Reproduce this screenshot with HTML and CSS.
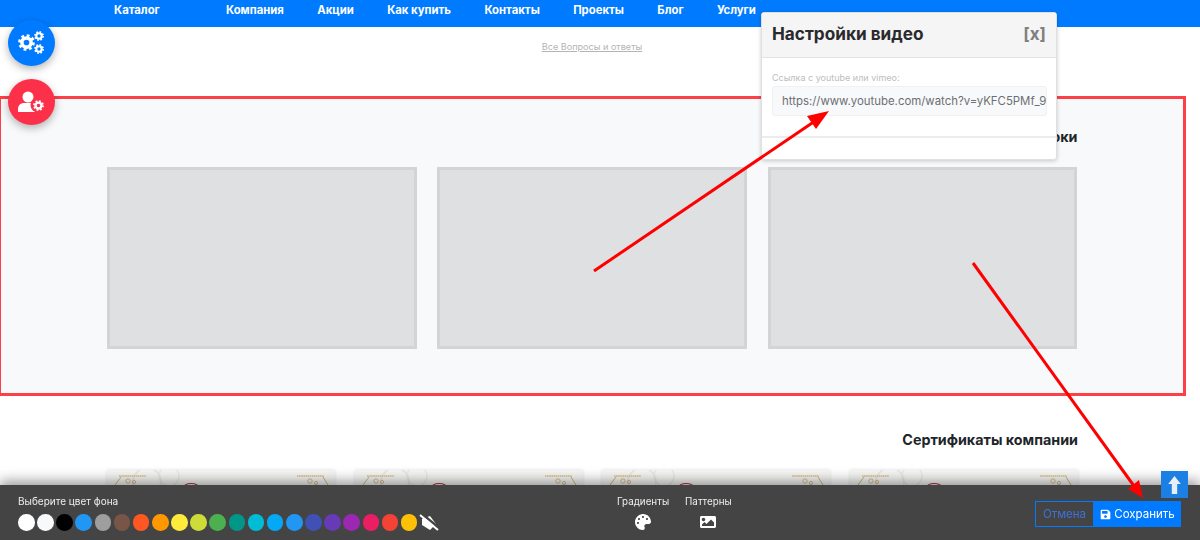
FILE: index.html
```html
<!DOCTYPE html>
<html lang="ru">
<head>
	<meta charset="UTF-8">
	<title>Настройки видео</title>
	<link rel="stylesheet" href="styles.css">
</head>
<body>
	<svg class="defs" width="0" height="0">
		<symbol id="gear" viewBox="0 0 24 24">
			<circle cx="12" cy="12" r="6.5" fill="none" stroke="currentColor" stroke-width="5"/>
			<circle cx="12" cy="12" r="9.8" fill="none" stroke="currentColor" stroke-width="4" stroke-dasharray="3.9 3.8"/>
		</symbol>
		<symbol id="ornament" viewBox="0 0 228 20">
			<circle cx="40" cy="12" r="14" fill="none" stroke="#e6e6e3" stroke-width="1.5"/>
			<circle cx="62" cy="6" r="10" fill="none" stroke="#e9e9e6" stroke-width="1.5"/>
			<path d="M12 6h27M190 6h27" fill="none" stroke="#e0cc9c" stroke-width="2" stroke-dasharray="1.5 .6"/>
			<path d="M14 7l-6 8M216 7l5 8" fill="none" stroke="#cdb27a" stroke-width="1"/>
			<circle cx="21" cy="11" r="2.2" fill="none" stroke="#cfb47c" stroke-width=".9"/>
			<circle cx="27" cy="12" r="1.6" fill="none" stroke="#cfb47c" stroke-width=".9"/>
			<circle cx="203" cy="11" r="2.2" fill="none" stroke="#cfb47c" stroke-width=".9"/>
			<circle cx="209" cy="13" r="1.6" fill="none" stroke="#cfb47c" stroke-width=".9"/>
			<path d="M76 18c2-6 14-6 17 0" fill="none" stroke="#b8303a" stroke-width="1.2"/>
		</symbol>
	</svg>

	<div class="nav">
		<a href="#" class="catalog">Каталог</a>
		<a href="#">Компания</a>
		<a href="#">Акции</a>
		<a href="#">Как купить</a>
		<a href="#">Контакты</a>
		<a href="#">Проекты</a>
		<a href="#">Блог</a>
		<a href="#">Услуги</a>
	</div>

	<div class="faq"><a href="#">Все Вопросы и ответы</a></div>

	<div class="video">
		<h2>Видеоуроки</h2>
		<div class="tiles">
			<div class="tile"></div>
			<div class="tile"></div>
			<div class="tile"></div>
		</div>
	</div>

	<div class="certs">
		<h2>Сертификаты компании</h2>
		<div class="cert-list">
			<div class="cert"><svg><use href="#ornament"/></svg></div>
			<div class="cert"><svg><use href="#ornament"/></svg></div>
			<div class="cert"><svg><use href="#ornament"/></svg></div>
			<div class="cert"><svg><use href="#ornament"/></svg></div>
		</div>
	</div>

	<a href="#" class="fab fab-blue">
		<svg width="27" height="24" viewBox="0 0 27 24">
			<use href="#gear" x="0" y="3" width="17" height="17"/>
			<use href="#gear" x="16" y="0" width="10" height="10"/>
			<use href="#gear" x="16" y="13" width="10" height="10"/>
		</svg>
	</a>
	<a href="#" class="fab fab-red">
		<svg width="27" height="22" viewBox="0 0 27 22">
			<circle cx="10" cy="6" r="5.5" fill="currentColor"/>
			<path d="M0 21v-3c0-4 3-6 6-6h8c1 0 2 .3 3 1v8z" fill="currentColor"/>
			<circle cx="20" cy="14" r="7.5" fill="#fd3049"/>
			<use href="#gear" x="15" y="9" width="11" height="11"/>
		</svg>
	</a>

	<div class="modal">
		<div class="modal-head">
			<span class="modal-title">Настройки видео</span>
			<span class="modal-close">[x]</span>
		</div>
		<div class="modal-body">
			<label>Ссылка с youtube или vimeo:</label>
			<div class="field">https://www.youtube.com/watch?v=yKFC5PMf_9</div>
		</div>
		<div class="modal-foot"></div>
	</div>

	<svg class="arrows" width="1200" height="540" viewBox="0 0 1200 540">
		<path d="M594 271L818 119" stroke="#f00" stroke-width="3" fill="none"/>
		<path d="M829 111L807 116L816 129z" fill="#f00"/>
		<path d="M973 263L1134 486" stroke="#f00" stroke-width="3" fill="none"/>
		<path d="M1143 498L1128 489L1139 480z" fill="#f00"/>
	</svg>

	<a href="#" class="up">
		<svg width="13" height="18" viewBox="0 0 14 20"><path d="M7 0l7 9H10v11H4V9H0z" fill="#e8eef5"/></svg>
	</a>

	<div class="bar">
		<div class="bar-colors">
			<div class="bar-label">Выберите цвет фона</div>
			<div class="swatches">
				<span class="swatch c-white"></span>
				<span class="swatch c-light"></span>
				<span class="swatch c-black"></span>
				<span class="swatch c-blue"></span>
				<span class="swatch c-grey"></span>
				<span class="swatch c-brown"></span>
				<span class="swatch c-deep-orange"></span>
				<span class="swatch c-orange"></span>
				<span class="swatch c-yellow"></span>
				<span class="swatch c-lime"></span>
				<span class="swatch c-green"></span>
				<span class="swatch c-teal"></span>
				<span class="swatch c-cyan"></span>
				<span class="swatch c-light-blue"></span>
				<span class="swatch c-blue"></span>
				<span class="swatch c-indigo"></span>
				<span class="swatch c-deep-purple"></span>
				<span class="swatch c-purple"></span>
				<span class="swatch c-pink"></span>
				<span class="swatch c-red"></span>
				<span class="swatch c-amber"></span>
				<svg class="no-fill" width="20" height="17" viewBox="0 0 20 17">
					<path d="M3 5l8-3 6 8-6 6-8-5z" fill="#fff"/>
					<path d="M3 0l16 13" stroke="#444" stroke-width="2.5"/>
					<path d="M1 1l18 15" stroke="#fff" stroke-width="2"/>
				</svg>
			</div>
		</div>
		<div class="bar-tool">
			<div class="bar-label">Градиенты</div>
			<svg width="16" height="16" viewBox="0 0 512 512"><path fill="#fff" d="M204.3 5C104.9 24.4 24.8 104.3 5.2 203.4c-37 187 131.7 326.4 258.8 306.7 41.2-6.4 61.4-54.6 42.5-91.7-23.1-45.4 9.9-98.4 61-98.4h79.7c35.8 0 64.8-29.6 64.9-65.3C511.5 97.1 368.1-26.9 204.3 5zM96 320c-17.7 0-32-14.3-32-32s14.3-32 32-32 32 14.3 32 32-14.3 32-32 32zm32-128c-17.7 0-32-14.3-32-32s14.3-32 32-32 32 14.3 32 32-14.3 32-32 32zm128-64c-17.7 0-32-14.3-32-32s14.3-32 32-32 32 14.3 32 32-14.3 32-32 32zm128 64c-17.7 0-32-14.3-32-32s14.3-32 32-32 32 14.3 32 32-14.3 32-32 32z"/></svg>
		</div>
		<div class="bar-tool">
			<div class="bar-label">Паттерны</div>
			<svg width="16" height="16" viewBox="0 0 512 512"><path fill="#fff" d="M464 448H48c-26.51 0-48-21.49-48-48V112c0-26.51 21.49-48 48-48h416c26.51 0 48 21.49 48 48v288c0 26.51-21.49 48-48 48zM112 120c-30.928 0-56 25.072-56 56s25.072 56 56 56 56-25.072 56-56-25.072-56-56-56zM64 384h384V272l-87.515-87.515c-4.686-4.686-12.284-4.686-16.971 0L208 320l-55.515-55.515c-4.686-4.686-12.284-4.686-16.971 0L64 336v48z"/></svg>
		</div>
		<div class="bar-buttons">
			<a href="#" class="btn btn-cancel">Отмена</a>
			<a href="#" class="btn btn-save">
				<svg width="11" height="11" viewBox="0 0 448 512"><path fill="#fff" d="M433.941 129.941l-83.882-83.882A48 48 0 0 0 316.118 32H48C21.49 32 0 53.49 0 80v352c0 26.51 21.49 48 48 48h352c26.51 0 48-21.49 48-48V163.882a48 48 0 0 0-14.059-33.941zM224 416c-35.346 0-64-28.654-64-64 0-35.346 28.654-64 64-64s64 28.654 64 64c0 35.346-28.654 64-64 64zm96-304.52V212c0 6.627-5.373 12-12 12H76c-6.627 0-12-5.373-12-12V108c0-6.627 5.373-12 12-12h228.52c3.183 0 6.235 1.264 8.485 3.515l3.48 3.48A11.996 11.996 0 0 1 320 111.48z"/></svg>
				Сохранить
			</a>
		</div>
	</div>
</body>
</html>
```

FILE: styles.css
```css
*{
	margin:0;
	padding:0;
	box-sizing:border-box;
	text-decoration:none;
}
html,body{
	height:540px;
	overflow:hidden;
}
body{
	font-family:"Inter","Noto Sans",sans-serif;
	background:#fff;
	color:#212529;
}
.defs{
	position:absolute;
}
.nav{
	height:27px;
	background:#007bff;
	padding-left:114px;
	display:flex;
	gap:33.4px;
	align-items:flex-start;
}
.nav a{
	color:#fff;
	font-size:11.3px;
	font-weight:700;
	line-height:20px;
}
.nav .catalog{
	width:78.6px;
}
.faq{
	height:69px;
	padding:13px 16px 0 0;
	text-align:center;
	font-size:9.1px;
	line-height:13px;
}
.faq a{
	color:#b4b4b4;
	text-decoration:underline;
}
.video{
	width:1188px;
	height:300px;
	margin-left:-2px;
	border:3px solid #fd4047;
	background:#f8f9fa;
	padding:29px 105.5px 0 106px;
}
.video h2,.certs h2{
	font-size:14.3px;
	font-weight:700;
	line-height:18px;
	text-align:right;
}
.tiles{
	display:flex;
	gap:20.5px;
	margin-top:21px;
}
.tile{
	width:310px;
	height:182px;
	border:3px solid #d2d4d6;
	background:#dfe0e2;
}
.certs{
	width:1186px;
	padding:35px 108px 0 107px;
}
.cert-list{
	display:flex;
	justify-content:space-between;
	margin-top:21px;
}
.cert{
	width:228px;
	height:60px;
	background:#f6f6f4;
	box-shadow:0 0 3px rgba(0,0,0,.12);
}
.cert svg{
	display:block;
	width:228px;
	height:20px;
}
.fab{
	position:absolute;
	left:8px;
	width:47px;
	height:46px;
	border-radius:50%;
	color:#fff;
	display:flex;
	align-items:center;
	justify-content:center;
	box-shadow:0 3px 8px rgba(0,0,0,.3);
}
.fab-blue{
	top:20px;
	background:#007bff;
}
.fab-red{
	top:79px;
	background:#fd3049;
}
.modal{
	position:absolute;
	left:761px;
	top:12px;
	width:296px;
	height:148px;
	background:#fff;
	border:1px solid #e0e0e0;
	border-radius:3px;
	box-shadow:0 1px 4px rgba(0,0,0,.2);
}
.modal-head{
	height:45px;
	background:#f5f5f5;
	border-bottom:1px solid #e4e4e4;
	padding:0 10px 3px;
	display:flex;
	justify-content:space-between;
	align-items:center;
}
.modal-title{
	font-size:17.2px;
	font-weight:700;
	color:#2a2a2e;
}
.modal-close{
	font-size:17px;
	font-weight:700;
	color:#808080;
}
.modal-body{
	height:80px;
	padding:14px 9px 0 10px;
	border-bottom:2px solid #ececec;
}
.modal-body label{
	display:block;
	font-size:9px;
	line-height:11px;
	color:#bdbdbd;
	margin-bottom:3px;
}
.field{
	height:30px;
	padding:0 9px;
	background:#f8f9fa;
	border:1px solid #f1f1f3;
	border-radius:3px;
	font-size:11.4px;
	line-height:28px;
	color:#6c6f73;
	white-space:nowrap;
}
.arrows{
	position:absolute;
	left:0;
	top:0;
	z-index:3;
	pointer-events:none;
}
.up{
	position:absolute;
	left:1161px;
	top:471px;
	width:27px;
	height:27px;
	background:#1b7fe3;
	display:flex;
	align-items:center;
	justify-content:center;
	z-index:2;
}
.bar{
	position:fixed;
	left:0;
	right:0;
	bottom:0;
	height:55px;
	background:#444;
	box-shadow:0 -4px 12px rgba(0,0,0,.4);
	padding:10px 19px 0 18px;
	display:flex;
	align-items:flex-start;
	z-index:1;
}
.bar-label{
	font-size:9.8px;
	line-height:13px;
	color:#eee;
}
.bar-colors .bar-label{
	font-size:10px;
}
.bar-colors{
	width:599px;
}
.swatches{
	display:flex;
	align-items:center;
	gap:2.55px;
	margin-top:6px;
}
.swatch{
	width:16.6px;
	height:16.6px;
	border-radius:50%;
}
.no-fill{
	margin-left:-1px;
}
.c-white{background:#fff;}
.c-light{background:#f8f9fa;}
.c-black{background:#000;}
.c-blue{background:#2196f3;}
.c-grey{background:#9e9e9e;}
.c-brown{background:#795548;}
.c-deep-orange{background:#ff5722;}
.c-orange{background:#ff9800;}
.c-yellow{background:#ffeb3b;}
.c-lime{background:#cddc39;}
.c-green{background:#4caf50;}
.c-teal{background:#009688;}
.c-cyan{background:#00bcd4;}
.c-light-blue{background:#03a9f4;}
.c-indigo{background:#3f51b5;}
.c-deep-purple{background:#673ab7;}
.c-purple{background:#9c27b0;}
.c-pink{background:#e91e63;}
.c-red{background:#f44336;}
.c-amber{background:#ffc107;}
.bar-tool{
	display:flex;
	flex-direction:column;
	align-items:center;
	gap:6px;
	margin-right:16px;
}
.bar-buttons{
	margin-left:auto;
	margin-top:6px;
	display:flex;
}
.btn{
	height:26px;
	font-size:11.5px;
	line-height:24px;
	border:1px solid #007bff;
	display:flex;
	align-items:center;
	gap:3px;
}
.btn-cancel{
	width:59px;
	justify-content:center;
	color:#3a72d8;
}
.btn-save{
	width:87px;
	justify-content:center;
	background:#007bff;
	color:#fff;
}
```
